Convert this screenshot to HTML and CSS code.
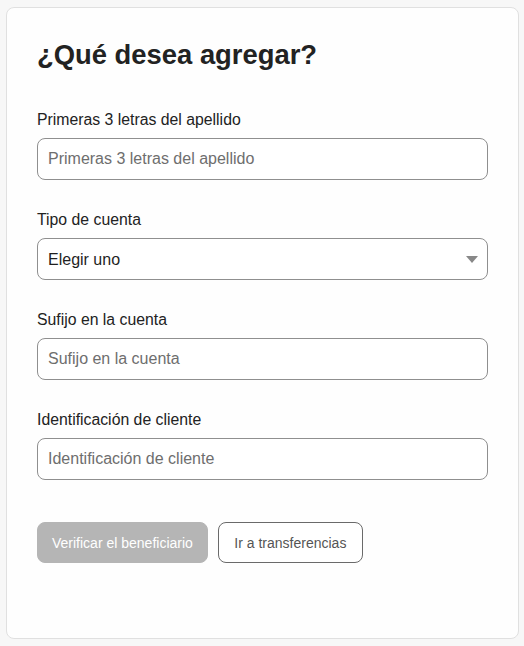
FILE: index.html
```html
<!DOCTYPE html>
<html lang="es">
<head>
<meta charset="utf-8">
<title>¿Qué desea agregar?</title>
<link rel="stylesheet" href="styles.css">
</head>
<body>
<main class="card">
  <h1 class="title">¿Qué desea agregar?</h1>
  <form class="form">
    <div class="field">
      <label class="label" for="f1">Primeras 3 letras del apellido</label>
      <input class="input" id="f1" type="text" placeholder="Primeras 3 letras del apellido">
    </div>
    <div class="field">
      <label class="label" for="f2">Tipo de cuenta</label>
      <div class="select-wrap">
        <select class="input select" id="f2">
          <option>Elegir uno</option>
        </select>
        <svg class="caret" width="12" height="7" viewBox="0 0 12 7" aria-hidden="true"><path d="M0 0H12L6 7Z" fill="#888"/></svg>
      </div>
    </div>
    <div class="field">
      <label class="label" for="f3">Sufijo en la cuenta</label>
      <input class="input" id="f3" type="text" placeholder="Sufijo en la cuenta">
    </div>
    <div class="field">
      <label class="label" for="f4">Identificación de cliente</label>
      <input class="input" id="f4" type="text" placeholder="Identificación de cliente">
    </div>
    <div class="actions">
      <button class="btn btn-primary" type="button" disabled>Verificar el beneficiario</button>
      <button class="btn btn-secondary" type="button">Ir a transferencias</button>
    </div>
  </form>
</main>
</body>
</html>
```
FILE: styles.css
```css
* { box-sizing: border-box; }
html, body { margin: 0; }
body {
  background: #f7f7f7;
  font-family: "Liberation Sans", Arial, sans-serif;
  color: #222;
  padding: 7px 0 0 6px;
}
.card {
  width: 513px;
  background: #fefefe;
  border: 1px solid #e0e0e0;
  border-radius: 8px;
  padding: 31px 30px 75px 30px;
}
.title {
  margin: 0;
  font-size: 27.4px;
  line-height: 32px;
  font-weight: 700;
  color: #222;
}
.form {
  margin-top: 39px;
  display: flex;
  flex-direction: column;
}
.field {
  display: flex;
  flex-direction: column;
  gap: 8px;
  margin-bottom: 30px;
}
.label {
  font-size: 15.8px;
  line-height: 20px;
  color: #222;
}
.input {
  width: 100%;
  height: 42px;
  border: 1px solid #8f8f8f;
  border-radius: 8px;
  background: #fff;
  padding: 0 10px;
  font-family: "Liberation Sans", Arial, sans-serif;
  font-size: 16px;
  color: #222;
  outline: none;
}
.input::placeholder { color: #6e6e6e; opacity: 1; }
.select-wrap { position: relative; }
.select {
  -webkit-appearance: none;
  appearance: none;
  color: #1f1f1f;
}
.caret {
  position: absolute;
  right: 10px;
  top: 18px;
}
.actions {
  display: flex;
  gap: 10px;
  margin-top: 12px;
}
.btn {
  height: 41px;
  border-radius: 8px;
  padding: 0 14px;
  font-family: "Liberation Sans", Arial, sans-serif;
  font-size: 14px;
}
.btn-primary {
  background: #b5b5b5;
  border: 1px solid #b5b5b5;
  color: #fff;
}
.btn-secondary {
  background: #fff;
  border: 1px solid #6a6a6a;
  color: #555;
  padding: 0 15.5px;
}
```
